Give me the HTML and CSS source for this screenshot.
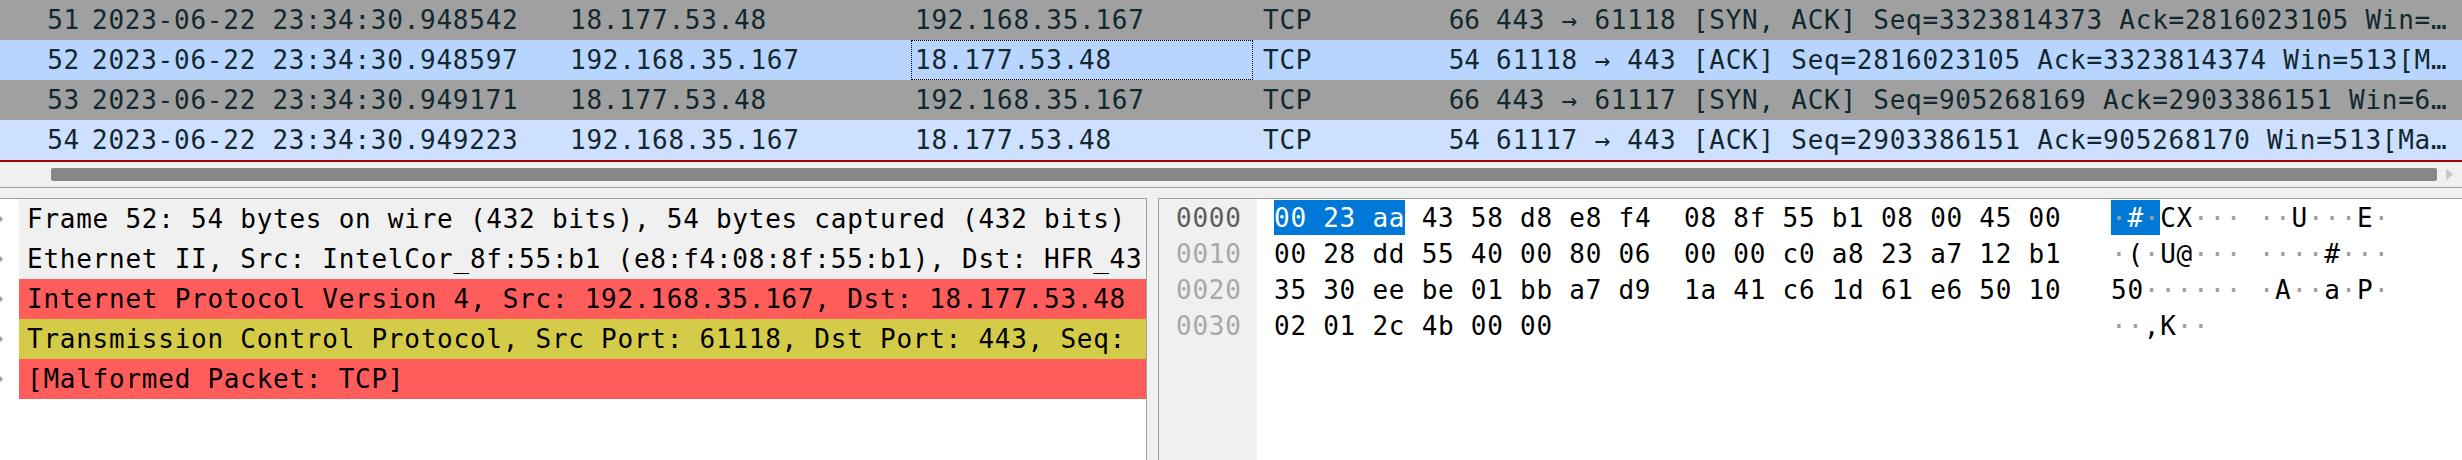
FILE: index.html
```html
<!DOCTYPE html>
<html>
<head>
<meta charset="utf-8">
<link rel="stylesheet" href="styles.css">
</head>
<body>
<div class="app">
  <div class="plist">
    <div class="prow r-gray">
      <span class="c-no">51</span><span class="c-time">2023-06-22 23:34:30.948542</span><span class="c-src">18.177.53.48</span><span class="c-dst">192.168.35.167</span><span class="c-proto">TCP</span><span class="c-len">66</span><span class="c-info">443 → 61118 [SYN, ACK] Seq=3323814373 Ack=2816023105 Win=…</span>
    </div>
    <div class="prow r-sel">
      <span class="c-no">52</span><span class="c-time">2023-06-22 23:34:30.948597</span><span class="c-src">192.168.35.167</span><span class="c-dst focus">18.177.53.48</span><span class="c-proto">TCP</span><span class="c-len">54</span><span class="c-info">61118 → 443 [ACK] Seq=2816023105 Ack=3323814374 Win=513[M…</span>
    </div>
    <div class="prow r-gray">
      <span class="c-no">53</span><span class="c-time">2023-06-22 23:34:30.949171</span><span class="c-src">18.177.53.48</span><span class="c-dst">192.168.35.167</span><span class="c-proto">TCP</span><span class="c-len">66</span><span class="c-info">443 → 61117 [SYN, ACK] Seq=905268169 Ack=2903386151 Win=6…</span>
    </div>
    <div class="prow r-blue">
      <span class="c-no">54</span><span class="c-time">2023-06-22 23:34:30.949223</span><span class="c-src">192.168.35.167</span><span class="c-dst">18.177.53.48</span><span class="c-proto">TCP</span><span class="c-len">54</span><span class="c-info">61117 → 443 [ACK] Seq=2903386151 Ack=905268170 Win=513[Ma…</span>
    </div>
  </div>
  <div class="hscroll">
    <div class="thumb"></div>
    <div class="arrow-right"></div>
  </div>
  <div class="splitter"></div>
  <div class="bottom">
    <div class="tree">
      <div class="trow t-plain"><span class="exp"></span><span class="ttext">Frame 52: 54 bytes on wire (432 bits), 54 bytes captured (432 bits)</span></div>
      <div class="trow t-plain"><span class="exp"></span><span class="ttext">Ethernet II, Src: IntelCor_8f:55:b1 (e8:f4:08:8f:55:b1), Dst: HFR_43</span></div>
      <div class="trow t-err"><span class="exp"></span><span class="ttext">Internet Protocol Version 4, Src: 192.168.35.167, Dst: 18.177.53.48</span></div>
      <div class="trow t-warn"><span class="exp"></span><span class="ttext">Transmission Control Protocol, Src Port: 61118, Dst Port: 443, Seq:</span></div>
      <div class="trow t-err"><span class="exp"></span><span class="ttext">[Malformed Packet: TCP]</span></div>
    </div>
    <div class="vsplit"></div>
    <div class="hex">
      <div class="offsets">
        <div class="hline off-cur">0000</div>
        <div class="hline">0010</div>
        <div class="hline">0020</div>
        <div class="hline">0030</div>
      </div>
      <div class="bytes">
        <div class="hline"><span class="hl">00 23 aa</span> 43 58 d8 e8 f4  08 8f 55 b1 08 00 45 00</div>
        <div class="hline">00 28 dd 55 40 00 80 06  00 00 c0 a8 23 a7 12 b1</div>
        <div class="hline">35 30 ee be 01 bb a7 d9  1a 41 c6 1d 61 e6 50 10</div>
        <div class="hline">02 01 2c 4b 00 00</div>
      </div>
      <div class="ascii">
        <div class="hline"><span class="hl"><i>·</i>#<i>·</i></span>CX<i>···</i> <i>··</i>U<i>···</i>E<i>·</i></div>
        <div class="hline"><i>·</i>(<i>·</i>U@<i>···</i> <i>····</i>#<i>···</i></div>
        <div class="hline">50<i>······</i> <i>·</i>A<i>··</i>a<i>·</i>P<i>·</i></div>
        <div class="hline"><i>··</i>,K<i>··</i></div>
      </div>
    </div>
  </div>
</div>
</body>
</html>
```

FILE: styles.css
```css
* { box-sizing: border-box; }
html, body {
  margin: 0;
  padding: 0;
  width: 2462px;
  height: 460px;
  overflow: hidden;
  background: #f0f0f0;
}
.app {
  display: flex;
  flex-direction: column;
  width: 2462px;
  height: 460px;
  font-family: "DejaVu Sans Mono", "Liberation Mono", monospace;
  font-size: 26px;
  letter-spacing: 0.75px;
}

/* packet list */
.plist {
  display: flex;
  flex-direction: column;
  border-bottom: 2px solid #a80000;
}
.prow {
  display: flex;
  height: 40px;
  align-items: center;
  color: #12272e;
}
.prow span {
  display: block;
  height: 100%;
  line-height: 40px;
  overflow: hidden;
  white-space: pre;
}
.r-gray { background: #a0a0a0; }
.r-sel { background: #b8d5ff; }
.r-blue { background: #cde0ff; }
.c-no { width: 80px; text-align: right; }
.c-time { width: 479px; padding-left: 12px; }
.c-src { width: 352px; padding-left: 11px; }
.c-dst { width: 342px; padding-left: 4px; }
.c-dst.focus { outline: 1px dotted #000; outline-offset: -1px; }
.c-proto { width: 184px; padding-left: 10px; }
.c-len { width: 43px; text-align: right; letter-spacing: 0; }
.c-info { flex: 1; padding-left: 16px; }

/* horizontal scrollbar */
.hscroll {
  height: 26px;
  display: flex;
  align-items: center;
  padding-left: 51px;
  border-bottom: 1px solid #a0a0a0;
}
.thumb {
  width: 2386px;
  height: 13px;
  background: #878787;
  border-radius: 2px;
}
.arrow-right {
  width: 7px;
  height: 12px;
  margin-left: 9px;
  background: #c8c8c8;
  clip-path: polygon(0 0, 100% 50%, 0 100%);
}
.splitter { height: 10px; }

/* bottom panes */
.bottom {
  flex: 1;
  display: flex;
  min-height: 0;
}
.tree {
  width: 1147px;
  background: #fff;
  border-top: 1px solid #a0a0a0;
  border-right: 1px solid #a0a0a0;
  color: #000;
  overflow: hidden;
}
.trow {
  display: flex;
  height: 40px;
  align-items: center;
}
.exp {
  width: 19px;
  height: 40px;
  background: #fff;
  display: flex;
  align-items: center;
}
.exp::before {
  content: "";
  width: 3px;
  height: 6px;
  background: #9a9a9a;
  clip-path: polygon(0 0, 100% 50%, 0 100%);
}
.ttext {
  flex: 1;
  height: 40px;
  line-height: 40px;
  padding-left: 8px;
  overflow: hidden;
  white-space: pre;
}
.t-plain .ttext { background: #f0f0f0; }
.t-err .ttext { background: #ff5c5c; }
.t-warn .ttext { background: #d4cc48; }

.vsplit { width: 11px; }

.hex {
  flex: 1;
  display: flex;
  align-items: flex-start;
  background: #fff;
  border-left: 1px solid #a0a0a0;
  border-top: 1px solid #a0a0a0;
  color: #000;
}
.hline { height: 36px; line-height: 36px; white-space: pre; }
.offsets {
  align-self: stretch;
  width: 98px;
  background: #f0f0f0;
  padding: 1px 0 0 17px;
  color: #a8a8a8;
}
.offsets .off-cur { color: #5c5c5c; }
.bytes { width: 854px; padding: 1px 0 0 17px; }
.ascii { padding-top: 1px; }
.hl { background: #0078d7; color: #fff; display: inline-block; height: 35px; }
.hl i { color: #fff; }
.ascii i { font-style: normal; color: #a0a0a0; }
```
